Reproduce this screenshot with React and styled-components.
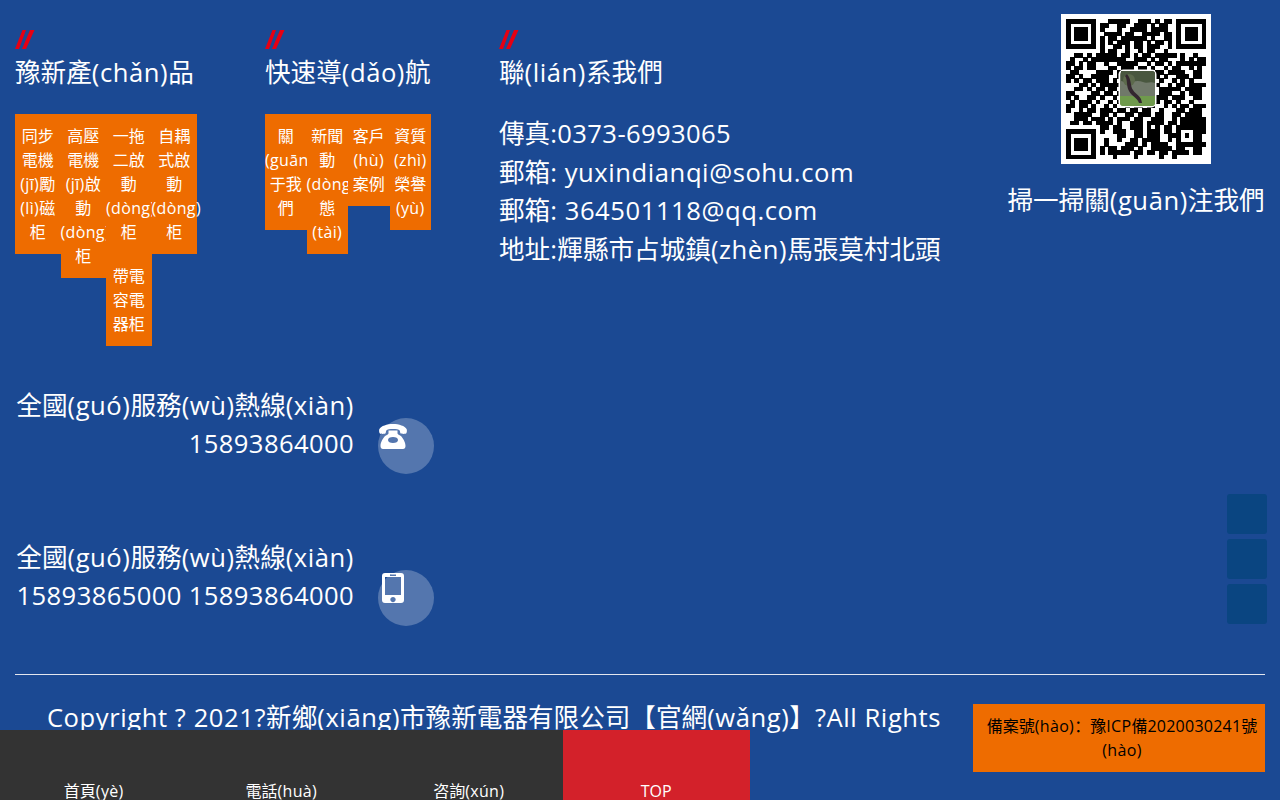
import React from "react";
import styled, { createGlobalStyle } from "styled-components";

const Global = createGlobalStyle`
  html, body { margin: 0; padding: 0; height: 800px; overflow: hidden; }
  body { background: #1b4993; font-family: "Open Sans", "Noto Sans CJK SC", sans-serif; color: #fff; font-size: 16px; line-height: 24px; }
  * { box-sizing: border-box; }
`;

const Page = styled.div`position: relative; width: 1280px; height: 800px; padding: 0 15px; overflow: hidden;`;
const Top = styled.div`display: flex; height: 660px;`;
const Left = styled.div`width: 484px; flex: none; padding-top: 30px;`;
const NavRow = styled.div`display: flex; height: 357px;`;
const NavCol = styled.div`width: ${p => p.$w}px; flex: none;`;
const Slashes = styled.svg`display: block; width: 20px; height: 20px;`;
const Title = styled.h3`margin: 4px 0 0; font-size: 25.6px; line-height: 38.4px; font-weight: 400; white-space: nowrap;`;
const Menu = styled.ul`list-style: none; margin: 22px 0 0; padding: 0; width: ${p => p.$w}px;`;
const MenuItem = styled.li`float: left; width: ${p => p.$w}px; padding: 10px 0; background: #ee6c00; text-align: center; font-size: 16px; line-height: 24px;`;
const Hot = styled.div`display: flex; width: 419px; height: 152px; gap: 24px; align-items: flex-start;`;
const HotText = styled.div`flex: 1; text-align: right; font-size: 25.6px; line-height: 38.4px; white-space: nowrap;`;
const Circle = styled.div`position: relative; width: 56px; height: 56px; margin-top: 31px; border-radius: 50%; background: rgba(255,255,255,.25); flex: none;`;
const IconSpot = styled.svg`position: absolute; left: ${p => p.$x}px; top: ${p => p.$y}px; fill: #fff;`;
const Contact = styled.div`width: 508px; flex: none; padding-top: 30px; font-size: 25.6px; line-height: 38.4px;`;
const ContactBody = styled.div`margin-top: 23px; white-space: nowrap;`;
const QrCol = styled.div`width: 258px; flex: none; padding-top: 14px; display: flex; flex-direction: column; align-items: center;`;
const QrBox = styled.svg`display: block; width: 150px; height: 150px; background: #fff;`;
const QrCaption = styled.div`margin-top: 18px; font-size: 25.6px; line-height: 38.4px; white-space: nowrap;`;
const Rule = styled.div`margin-top: 14px; height: 1px; background: #e3e6ee;`;
const Foot = styled.div`display: flex; align-items: flex-start;`;
const Copy = styled.div`flex: 1; margin-top: 24px; padding: 0 20px; text-align: center; font-size: 25.6px; line-height: 38.4px;`;
const Beian = styled.div`width: 292px; flex: none; margin-top: 29px; padding: 10px 0 10px 6px; background: #ee6c00; color: #000; text-align: center; font-size: 16px; line-height: 24px;`;
const Side = styled.div`position: absolute; right: 13px; top: 494px; display: flex; flex-direction: column; gap: 5px;`;
const SideBtn = styled.div`width: 40px; height: 40px; border-radius: 3px; background: #0a4581;`;
const Bar = styled.div`position: absolute; left: 0; bottom: 0; width: 750px; height: 70px; background: #333; display: flex;`;
const BarItem = styled.div`flex: 1; padding-top: 52px; text-align: center; color: #fff; font-size: 16px; line-height: 18px; background: ${p => p.$red ? "#d3212a" : "transparent"};`;
const Lat = styled.span`letter-spacing: ${p => p.$digits ? ".015em" : ".022em"};`;

function T({ children }) {
  return String(children).split(/([\u3000-\u9fff\uff00-\uffef]+)/).map((part, i) =>
    i % 2 === 1 || !part ? part : <Lat key={i} $digits={/^[\d\s:-]+$/.test(part)}>{part}</Lat>
  );
}

const seed = [
  "101101011001110101011010110","010111000110111001100101011","110001101100010111101011001","101110011011100100101101101",
  "011001110101101110110100110","100110111010011011001011010","101010101010101011010110110","001101011001101001011100101",
  "010110101011001101010011011010110",
  "001001011101110010110101100100101",
  "110110100110011011001011010111011",
  "010101110001101100110100101001101",
  "101100101110010101101011011100010",
  "011010011010110011010110100110111",
  "110101101100101100101001011010100",
  "001011010111010011011110010101011",
  "100110101001101101100101101101101",
  "011001011011010010110010110010110",
  "110100110100101101011011001101011",
  "101011001011011010100101110100100",
  "010111010010100101101100101011011",
  "110010101101011010010011010110101",
  "001101100110100110111010001101110",
  "100110011001011101000111011011011",
  "011011101110110011101110010111111",
  "011011010110100111010010110101101",
  "101101011001110001011101100111111",
  "110100111001010011011100110111011",
  "011110100100110011011100110101010",
  "110011010110001110101110100101111",
  "101010110101001110101011010100011",
  "010110011011011101001101101110110",
  "101101101001101011010011011010010",
];
const N = 33;
const at = (x, y) => (seed[y] && seed[y][x] === "1" ? 1 : 0);
const M = 4.24;
const inFinder = (x, y, ox, oy) => x >= ox && x < ox + 8 && y >= oy && y < oy + 8;
const finderOn = (x, y) => {
  const edge = x === 0 || y === 0 || x === 6 || y === 6;
  const core = x >= 2 && x <= 4 && y >= 2 && y <= 4;
  return x >= 0 && y >= 0 && x < 7 && y < 7 && (edge || core);
};

function cell(x, y) {
  if (inFinder(x, y, 0, 0)) return finderOn(x, y);
  if (inFinder(x, y, 25, 0)) return finderOn(x - 26, y);
  if (inFinder(x, y, 0, 25)) return finderOn(x, y - 26);
  const ax = x - 26, ay = y - 25;
  if (ax >= 0 && ax < 5 && ay >= 0 && ay < 5) return ax === 0 || ay === 0 || ax === 4 || ay === 4 || (ax === 2 && ay === 2);
  return at(x, y) + at(x + 1, y) + at(x, y + 1) >= 2;
}

function QrCode() {
  const cells = [];
  for (let y = 0; y < N; y++) for (let x = 0; x < N; x++) {
    if (cell(x, y)) cells.push(<rect key={`${x}-${y}`} x={5 + x * M} y={5 + y * M} width={M + 0.4} height={M + 0.4} fill="#000" />);
  }
  return (
    <QrBox viewBox="0 0 150 150" shapeRendering="crispEdges">
      {cells}
      <g shapeRendering="auto">
        <rect x="57.5" y="55.5" width="38" height="38" rx="5" fill="#fff" />
        <rect x="59" y="57" width="35" height="35" rx="4" fill="#70796a" />
        <path d="M60 57h32c1 0 2 1 2 2v10c-5-2-8 1-12-1-7-3-14 2-22-1z" fill="#49573f" />
        <circle cx="68" cy="66" r="6" fill="#5c6a4c" />
        <path d="M59 82h35v7a3 3 0 0 1-3 3H62a3 3 0 0 1-3-3z" fill="#6f9a4c" />
        <path d="M66 60c5 6 3 12 6 16 3 5 8 5 9 13h-3c-2-6-7-6-10-12-3-5-1-11-4-15z" fill="#33262f" />
      </g>
    </QrBox>
  );
}

const MarkSlash = () => (
  <Slashes viewBox="0 0 20 20">
    <path d="M0 19 L7.500 0 L11 0 L4 19Z M7 19 L15 0 L19.500 0 L11 19Z" fill="#e60012" />
  </Slashes>
);

const products = ["同步電機(jī)勵(lì)磁柜", "高壓電機(jī)啟動(dòng)柜", "一拖二啟動(dòng)柜", "自耦式啟動(dòng)柜", "帶電容電器柜"];
const links = ["關(guān)于我們", "新聞動(dòng)態(tài)", "客戶(hù)案例", "資質(zhì)榮譽(yù)"];
const contacts = ["傳真:0373-6993065", "郵箱: yuxindianqi@sohu.com", "郵箱: 364501118@qq.com", "地址:輝縣市占城鎮(zhèn)馬張莫村北頭"];

export default function App() {
  return (
    <Page>
      <Global />
      <Top>
        <Left>
          <NavRow>
            <NavCol $w={250}>
              <MarkSlash />
              <Title><T>豫新產(chǎn)品</T></Title>
              <Menu $w={182}>
                {products.map(t => <MenuItem key={t} $w={45.5}><T>{t}</T></MenuItem>)}
              </Menu>
            </NavCol>
            <NavCol $w={234}>
              <MarkSlash />
              <Title><T>快速導(dǎo)航</T></Title>
              <Menu $w={166}>
                {links.map(t => <MenuItem key={t} $w={41.5}><T>{t}</T></MenuItem>)}
              </Menu>
            </NavCol>
          </NavRow>
          <Hot>
            <HotText><T>全國(guó)服務(wù)熱線(xiàn)</T><br /><T>15893864000</T></HotText>
            <Circle>
              <IconSpot $x={1} $y={6} width="28" height="25" viewBox="0 0 28 25">
                <path d="M14 0c6 0 12 2 13.600 5 .6 1.400.2 4-.6 4.600-.8.5-4.500.5-5.300 0-.7-.5-.5-2.600-1-3.200C19.800 5.300 17 5 14 5s-5.800.3-6.700 1.400c-.5.6-.3 2.700-1 3.200-.8.5-4.500.5-5.300 0C.2 9 -.2 6.400.4 5 2 2 8 0 14 0z" />
                <path fillRule="evenodd" d="M9.500 6.500h9v3c0 .8 2 1.500 3 2.200 2.500 2 5 6.500 5 10.300 0 1.800-1 3-2.500 3H4c-1.500 0-2.500-1.200-2.500-3 0-3.800 2.500-8.300 5-10.300 1-.7 3-1.400 3-2.200z M14 13c-3 0-5 1.300-5 3s2 3 5 3 5-1.300 5-3-2-3-5-3z" />
              </IconSpot>
            </Circle>
          </Hot>
          <Hot>
            <HotText><T>全國(guó)服務(wù)熱線(xiàn)</T><br /><T>15893865000 15893864000</T></HotText>
            <Circle>
              <IconSpot $x={4} $y={3} width="22" height="30" viewBox="0 0 22 30">
                <path fillRule="evenodd" d="M3 0h16a3 3 0 0 1 3 3v24a3 3 0 0 1-3 3H3a3 3 0 0 1-3-3V3a3 3 0 0 1 3-3z M3 4v18h16V4z M8 1.500v1.500h6V1.500z M11 24c-1.500 0-2.700 1.100-2.700 2.600S9.500 29.200 11 29.200s2.700-1.100 2.700-2.600S12.500 24 11 24z" />
              </IconSpot>
            </Circle>
          </Hot>
        </Left>
        <Contact>
          <MarkSlash />
          <Title><T>聯(lián)系我們</T></Title>
          <ContactBody>
            {contacts.map(c => <div key={c}><T>{c}</T></div>)}
          </ContactBody>
        </Contact>
        <QrCol>
          <QrCode />
          <QrCaption><T>掃一掃關(guān)注我們</T></QrCaption>
        </QrCol>
      </Top>
      <Rule />
      <Foot>
        <Copy><T>Copyright ? 2021?新鄉(xiāng)市豫新電器有限公司【官網(wǎng)】?All Rights Reserved</T></Copy>
        <Beian><T>備案號(hào)：豫ICP備2020030241號(hào)</T></Beian>
      </Foot>
      <Side>
        <SideBtn /><SideBtn /><SideBtn />
      </Side>
      <Bar>
        <BarItem><T>首頁(yè)</T></BarItem>
        <BarItem><T>電話(huà)</T></BarItem>
        <BarItem><T>咨詢(xún)</T></BarItem>
        <BarItem $red>TOP</BarItem>
      </Bar>
    </Page>
  );
}
